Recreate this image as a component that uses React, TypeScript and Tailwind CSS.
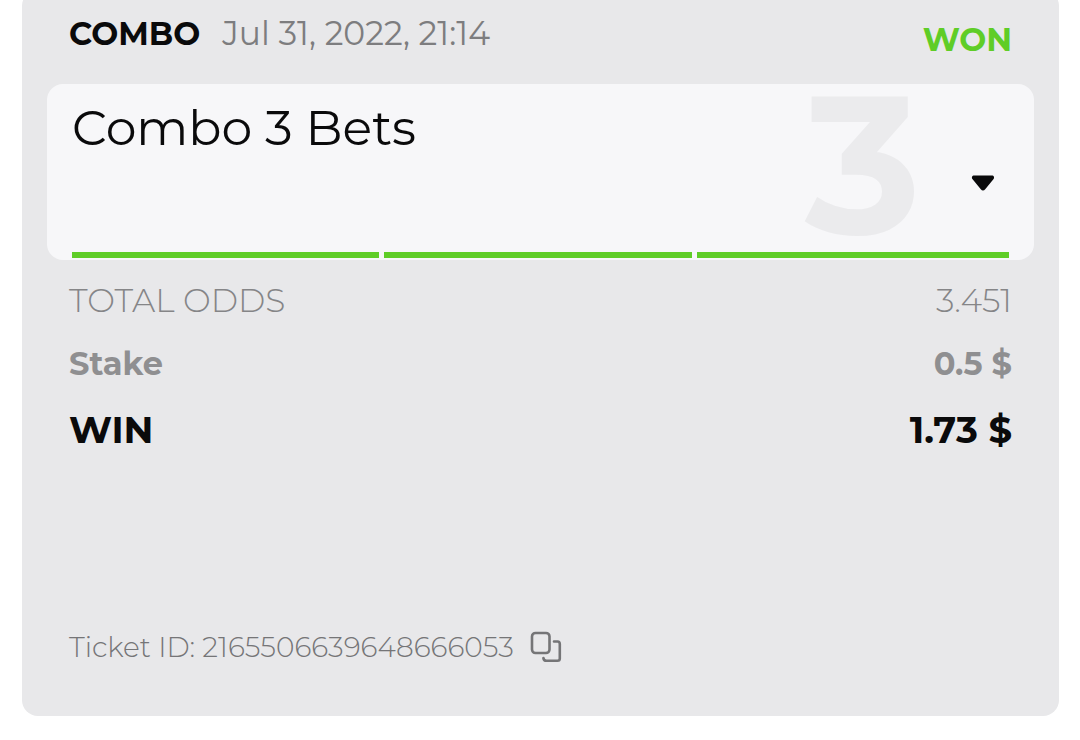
import { useState } from "react";

const legs = [
  { id: 1, tone: "bg-[#5fcd27]" },
  { id: 2, tone: "bg-[#5fcd27]" },
  { id: 3, tone: "bg-[#5fcd27]" },
] as const;

const totals = [
  { label: "TOTAL ODDS", value: "3.451", style: "h-[62px] text-[33px] font-light text-[#858587]" },
  { label: "Stake", value: "0.5 $", style: "h-16 text-[32px] font-bold text-[#8f8f91]" },
  { label: "WIN", value: "1.73 $", style: "h-17 text-[37px] font-bold text-[#0a0a0b]" },
] as const;

function CaretIcon() {
  return (
    <svg width="24" height="16" viewBox="0 0 24 16" fill="currentColor" aria-hidden="true">
      <path d="M3.2 0.4H20.8C23 0.4 23.8 2.6 22.4 4.2L14.2 14.2C12.9 15.9 11.1 15.9 9.8 14.2L1.6 4.2C0.2 2.6 1 0.4 3.2 0.4Z" />
    </svg>
  );
}

function CopyIcon() {
  return (
    <svg
      width="32"
      height="32"
      viewBox="0 0 32 32"
      fill="none"
      stroke="currentColor"
      strokeWidth="2.6"
      strokeLinecap="round"
      strokeLinejoin="round"
      aria-hidden="true"
    >
      <rect x="2" y="2" width="17.5" height="20" rx="3.5" />
      <path d="M24 10.5H27.5C29 10.5 29.8 11.4 29.8 13V27.5C29.8 29 29 29.8 27.5 29.8H16.5C14.6 29.8 13.6 28.8 13.4 27" />
    </svg>
  );
}

export default function App() {
  const [open, setOpen] = useState(false);
  const ticketId = "2165506639648666053";

  return (
    <main className="overflow-hidden bg-white pr-[21px] pb-6 pl-[22px] font-['Montserrat','Inter',sans-serif]">
      <article className="-mt-2.5 rounded-2xl bg-[#e8e8ea] pb-[47px]">
        <header className="flex items-start justify-between px-[47px] pt-5 pb-3.5">
          <div className="flex items-baseline gap-[22px] text-[32px] leading-[46px]">
            <h1 className="font-bold text-[#0a0a0b]">COMBO</h1>
            <time dateTime="2022-07-31T21:14" className="text-[33px] text-[#7d7d7f]">
              Jul 31, 2022, 21:14
            </time>
          </div>
          <strong className="text-[32px] leading-[60px] font-bold text-[#5fcd27]">WON</strong>
        </header>

        <section className="mx-[25px] flex h-44 flex-col rounded-2xl bg-[#f7f7f9] px-[25px] pb-0.5">
          <div className="flex flex-1 justify-between">
            <h2 className="pt-3 text-[49px] leading-[64px] text-[#0a0a0b]">Combo 3 Bets</h2>
            <div className="flex items-start gap-10 pr-1">
              <span
                className="text-[196px] leading-[160px] font-bold text-[#ebebed]"
                aria-hidden="true"
              >
                3
              </span>
              <button
                type="button"
                aria-label="Show bets"
                aria-expanded={open}
                onClick={() => setOpen(!open)}
                className="mt-[81px] p-2.5 text-[#0a0a0b]"
              >
                <CaretIcon />
              </button>
            </div>
          </div>
          <div className="grid grid-cols-[32.8%_32.8%_1fr] gap-[5px]">
            {legs.map((leg) => (
              <div key={leg.id} className={`h-1.5 ${leg.tone}`} />
            ))}
          </div>
        </section>

        <dl className="px-[47px] pt-2.5">
          {totals.map((row) => (
            <div key={row.label} className={`flex items-center justify-between ${row.style}`}>
              <dt>{row.label}</dt>
              <dd>{row.value}</dd>
            </div>
          ))}
        </dl>

        <footer className="mt-[161px] flex h-11 items-center gap-4 px-[47px] text-[#757577]">
          <p className="text-[28px] font-light">Ticket ID: {ticketId}</p>
          <button
            type="button"
            aria-label="Copy ticket ID"
            onClick={() => navigator.clipboard.writeText(ticketId)}
          >
            <CopyIcon />
          </button>
        </footer>
      </article>
    </main>
  );
}
